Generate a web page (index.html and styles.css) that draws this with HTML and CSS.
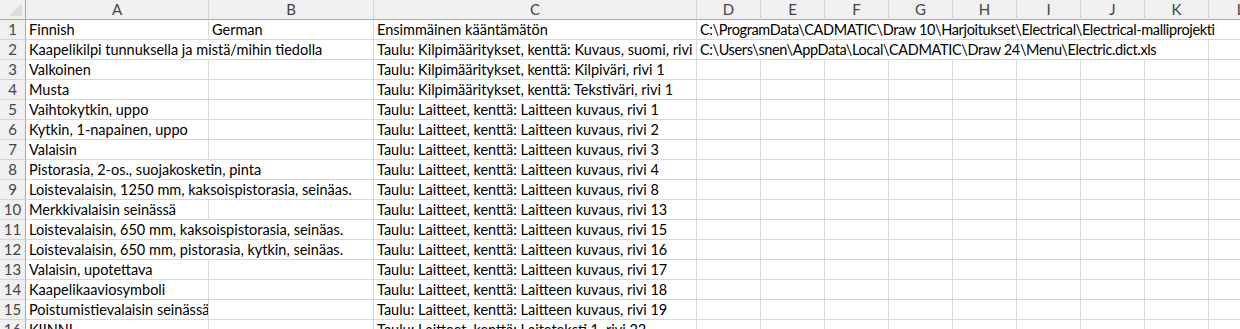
FILE: index.html
```html
<!DOCTYPE html>
<html lang="fi">
<head>
<meta charset="utf-8">
<title>Sheet</title>
<link rel="stylesheet" href="styles.css">
</head>
<body>
<div class="sheet">
  <div class="hdr corner"><svg class="tri" width="26" height="20" viewBox="0 0 26 20"><polygon points="9,16 22,16 22,3" fill="#dbdbdb"/></svg></div>
  <div class="hdr col">A</div>
  <div class="hdr col">B</div>
  <div class="hdr col">C</div>
  <div class="hdr col">D</div>
  <div class="hdr col">E</div>
  <div class="hdr col">F</div>
  <div class="hdr col">G</div>
  <div class="hdr col">H</div>
  <div class="hdr col">I</div>
  <div class="hdr col">J</div>
  <div class="hdr col">K</div>
  <div class="hdr col">L</div>

  <div class="hdr rn">1</div>
  <div class="c">Finnish</div><div class="c">German</div><div class="c">Ensimmäinen kääntämätön</div>
  <div class="c s9 path">C:\ProgramData\CADMATIC\Draw 10\Harjoitukset\Electrical\Electrical-malliprojekti</div>

  <div class="hdr rn">2</div>
  <div class="c s2">Kaapelikilpi tunnuksella ja mistä/mihin tiedolla</div><div class="c">Taulu: Kilpimääritykset, kenttä: Kuvaus, suomi, rivi 1</div>
  <div class="c s8 path">C:\Users\snen\AppData\Local\CADMATIC\Draw 24\Menu\Electric.dict.xls</div><div class="c"></div>

  <div class="hdr rn">3</div>
  <div class="c">Valkoinen</div><div class="c"></div><div class="c">Taulu: Kilpimääritykset, kenttä: Kilpiväri, rivi 1</div>
  <div class="c"></div><div class="c"></div><div class="c"></div><div class="c"></div><div class="c"></div><div class="c"></div><div class="c"></div><div class="c"></div><div class="c"></div>

  <div class="hdr rn">4</div>
  <div class="c">Musta</div><div class="c"></div><div class="c">Taulu: Kilpimääritykset, kenttä: Tekstiväri, rivi 1</div>
  <div class="c"></div><div class="c"></div><div class="c"></div><div class="c"></div><div class="c"></div><div class="c"></div><div class="c"></div><div class="c"></div><div class="c"></div>

  <div class="hdr rn">5</div>
  <div class="c">Vaihtokytkin, uppo</div><div class="c"></div><div class="c">Taulu: Laitteet, kenttä: Laitteen kuvaus, rivi 1</div>
  <div class="c"></div><div class="c"></div><div class="c"></div><div class="c"></div><div class="c"></div><div class="c"></div><div class="c"></div><div class="c"></div><div class="c"></div>

  <div class="hdr rn">6</div>
  <div class="c">Kytkin, 1-napainen, uppo</div><div class="c"></div><div class="c">Taulu: Laitteet, kenttä: Laitteen kuvaus, rivi 2</div>
  <div class="c"></div><div class="c"></div><div class="c"></div><div class="c"></div><div class="c"></div><div class="c"></div><div class="c"></div><div class="c"></div><div class="c"></div>

  <div class="hdr rn">7</div>
  <div class="c">Valaisin</div><div class="c"></div><div class="c">Taulu: Laitteet, kenttä: Laitteen kuvaus, rivi 3</div>
  <div class="c"></div><div class="c"></div><div class="c"></div><div class="c"></div><div class="c"></div><div class="c"></div><div class="c"></div><div class="c"></div><div class="c"></div>

  <div class="hdr rn">8</div>
  <div class="c s2">Pistorasia, 2-os., suojakosketin, pinta</div><div class="c">Taulu: Laitteet, kenttä: Laitteen kuvaus, rivi 4</div>
  <div class="c"></div><div class="c"></div><div class="c"></div><div class="c"></div><div class="c"></div><div class="c"></div><div class="c"></div><div class="c"></div><div class="c"></div>

  <div class="hdr rn">9</div>
  <div class="c s2">Loistevalaisin, 1250 mm, kaksoispistorasia, seinäas.</div><div class="c">Taulu: Laitteet, kenttä: Laitteen kuvaus, rivi 8</div>
  <div class="c"></div><div class="c"></div><div class="c"></div><div class="c"></div><div class="c"></div><div class="c"></div><div class="c"></div><div class="c"></div><div class="c"></div>

  <div class="hdr rn">10</div>
  <div class="c">Merkkivalaisin seinässä</div><div class="c"></div><div class="c">Taulu: Laitteet, kenttä: Laitteen kuvaus, rivi 13</div>
  <div class="c"></div><div class="c"></div><div class="c"></div><div class="c"></div><div class="c"></div><div class="c"></div><div class="c"></div><div class="c"></div><div class="c"></div>

  <div class="hdr rn">11</div>
  <div class="c s2">Loistevalaisin, 650 mm, kaksoispistorasia, seinäas.</div><div class="c">Taulu: Laitteet, kenttä: Laitteen kuvaus, rivi 15</div>
  <div class="c"></div><div class="c"></div><div class="c"></div><div class="c"></div><div class="c"></div><div class="c"></div><div class="c"></div><div class="c"></div><div class="c"></div>

  <div class="hdr rn">12</div>
  <div class="c s2">Loistevalaisin, 650 mm, pistorasia, kytkin, seinäas.</div><div class="c">Taulu: Laitteet, kenttä: Laitteen kuvaus, rivi 16</div>
  <div class="c"></div><div class="c"></div><div class="c"></div><div class="c"></div><div class="c"></div><div class="c"></div><div class="c"></div><div class="c"></div><div class="c"></div>

  <div class="hdr rn">13</div>
  <div class="c">Valaisin, upotettava</div><div class="c"></div><div class="c">Taulu: Laitteet, kenttä: Laitteen kuvaus, rivi 17</div>
  <div class="c"></div><div class="c"></div><div class="c"></div><div class="c"></div><div class="c"></div><div class="c"></div><div class="c"></div><div class="c"></div><div class="c"></div>

  <div class="hdr rn">14</div>
  <div class="c">Kaapelikaaviosymboli</div><div class="c"></div><div class="c">Taulu: Laitteet, kenttä: Laitteen kuvaus, rivi 18</div>
  <div class="c"></div><div class="c"></div><div class="c"></div><div class="c"></div><div class="c"></div><div class="c"></div><div class="c"></div><div class="c"></div><div class="c"></div>

  <div class="hdr rn">15</div>
  <div class="c">Poistumistievalaisin seinässä</div><div class="c"></div><div class="c">Taulu: Laitteet, kenttä: Laitteen kuvaus, rivi 19</div>
  <div class="c"></div><div class="c"></div><div class="c"></div><div class="c"></div><div class="c"></div><div class="c"></div><div class="c"></div><div class="c"></div><div class="c"></div>

  <div class="hdr rn">16</div>
  <div class="c">KIINNI</div><div class="c"></div><div class="c">Taulu: Laitteet, kenttä: Laiteteksti 1, rivi 22</div>
  <div class="c"></div><div class="c"></div><div class="c"></div><div class="c"></div><div class="c"></div><div class="c"></div><div class="c"></div><div class="c"></div><div class="c"></div>
</div>
</body>
</html>
```
FILE: styles.css
```css
html, body {
  margin: 0;
  padding: 0;
  background: #ffffff;
  overflow: hidden;
}
.sheet {
  display: grid;
  grid-template-columns: 26px 183px 165px 323px repeat(9, 64px);
  grid-template-rows: 20px;
  grid-auto-rows: 20px;
  width: 1273px;
  font-family: "Lato", "Liberation Sans", sans-serif;
  font-size: 14.5px;
  color: #000000;
}
.hdr {
  box-sizing: border-box;
  background: #f0f0f0;
  color: #444444;
  font-size: 15px;
  display: flex;
  align-items: flex-end;
  justify-content: center;
  padding-bottom: 2px;
  line-height: 16px;
  border-right: 1px solid #d5d5d5;
  border-bottom: 1px solid #d5d5d5;
}
.hdr.col {
  border-bottom-color: #a8a8a8;
}
.hdr.rn {
  border-right-color: #a8a8a8;
}
.hdr.corner {
  border-bottom-color: #a8a8a8;
  border-right-color: #a8a8a8;
  padding: 0;
  position: relative;
}
.tri {
  position: absolute;
  left: 0;
  top: 0;
}
.c {
  box-sizing: border-box;
  border-right: 1px solid #d9d9d9;
  border-bottom: 1px solid #d9d9d9;
  padding: 0 3px;
  line-height: 16px;
  padding-top: 2px;
  white-space: nowrap;
  overflow: hidden;
}
.path {
  letter-spacing: -0.35px;
}
.s2 { grid-column: span 2; }
.s8 { grid-column: span 8; }
.s9 { grid-column: span 9; }
```
